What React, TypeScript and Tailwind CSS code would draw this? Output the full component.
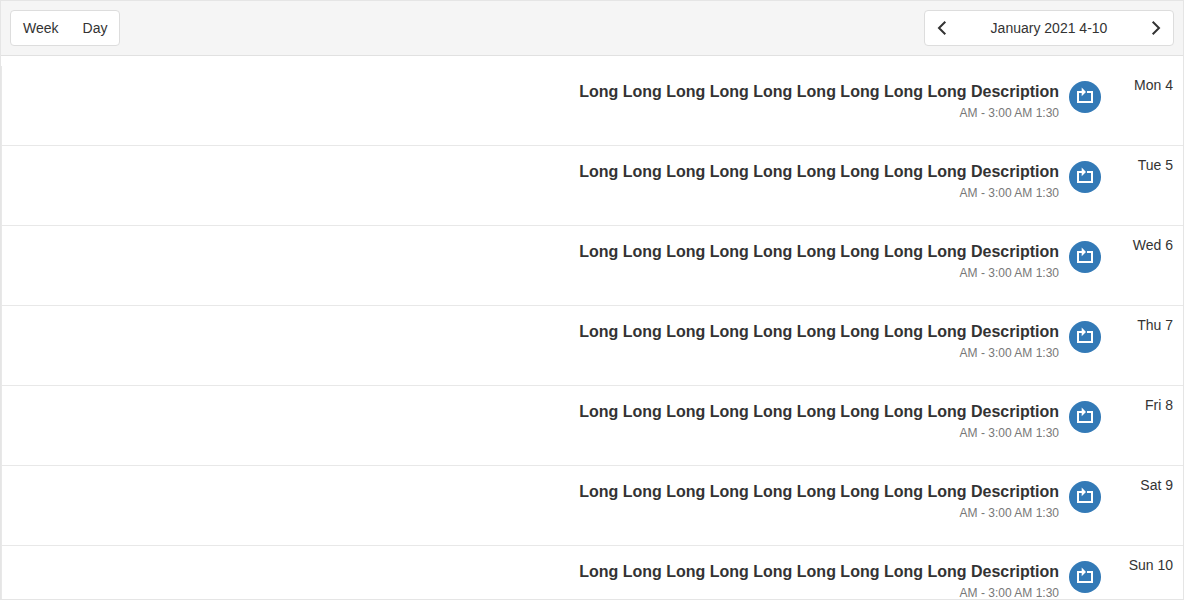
const days = ["Mon 4", "Tue 5", "Wed 6", "Thu 7", "Fri 8", "Sat 9", "Sun 10"];

function RecurringIcon() {
  return (
    <svg viewBox="0 0 32 32" className="size-8 shrink-0" role="img" aria-label="Recurring">
      <circle cx="16" cy="16" r="16" fill="#337ab7" />
      <path
        d="M8 10H12.7V6.6L17 11L12.7 15.3V12H10V20H22V12H18V10H24V22H8Z"
        fill="#fff"
      />
    </svg>
  );
}

function Chevron({ direction }: { direction: "left" | "right" }) {
  return (
    <svg viewBox="0 0 16 16" className="size-4" fill="none" stroke="#333" strokeWidth="2" aria-hidden="true">
      <path d={direction === "left" ? "M11.3 1.7L5 8L11.3 14.3" : "M4.7 1.7L11 8L4.7 14.3"} />
    </svg>
  );
}

function DayRow({ day }: { day: string }) {
  return (
    <li className="flex h-20 shrink-0 justify-end border-b border-[#e8e8e8] pr-2.5">
      <div className="flex gap-2.5 pt-[15px]">
        <div className="text-right">
          <h2 className="text-base leading-[22px] font-bold">
            Long Long Long Long Long Long Long Long Long Description
          </h2>
          <p className="mt-0.5 text-xs leading-4 text-[#777]">AM - 3:00 AM 1:30</p>
        </div>
        <RecurringIcon />
      </div>
      <time className="w-[72px] pt-2.5 text-right text-sm leading-[18px]">{day}</time>
    </li>
  );
}

export default function App() {
  return (
    <main className="flex h-screen flex-col overflow-hidden border border-[#e5e5e5] bg-white font-['Liberation_Sans',Arial,sans-serif] text-[#333]">
      <header className="flex shrink-0 items-center justify-between border-b border-[#e1e1e1] bg-[#f5f5f5] px-[9px] py-[9px]">
        <div className="flex h-9 rounded-sm border border-[#ddd] bg-white text-sm">
          <button type="button" className="px-3">Week</button>
          <button type="button" className="px-3">Day</button>
        </div>
        <nav aria-label="Week navigation" className="flex h-9 w-[250px] items-center justify-between rounded-sm border border-[#ddd] bg-white text-sm">
          <button type="button" aria-label="Previous week" className="flex h-full w-[34px] items-center justify-center">
            <Chevron direction="left" />
          </button>
          <button type="button" className="h-full grow">January 2021 4-10</button>
          <button type="button" aria-label="Next week" className="flex h-full w-[34px] items-center justify-center">
            <Chevron direction="right" />
          </button>
        </nav>
      </header>
      <section className="flex min-h-0 grow flex-col pt-2.5">
        <ul className="flex min-h-0 grow flex-col overflow-hidden border-l border-[#e8e8e8]">
          {days.map((day) => (
            <DayRow key={day} day={day} />
          ))}
        </ul>
      </section>
    </main>
  );
}
